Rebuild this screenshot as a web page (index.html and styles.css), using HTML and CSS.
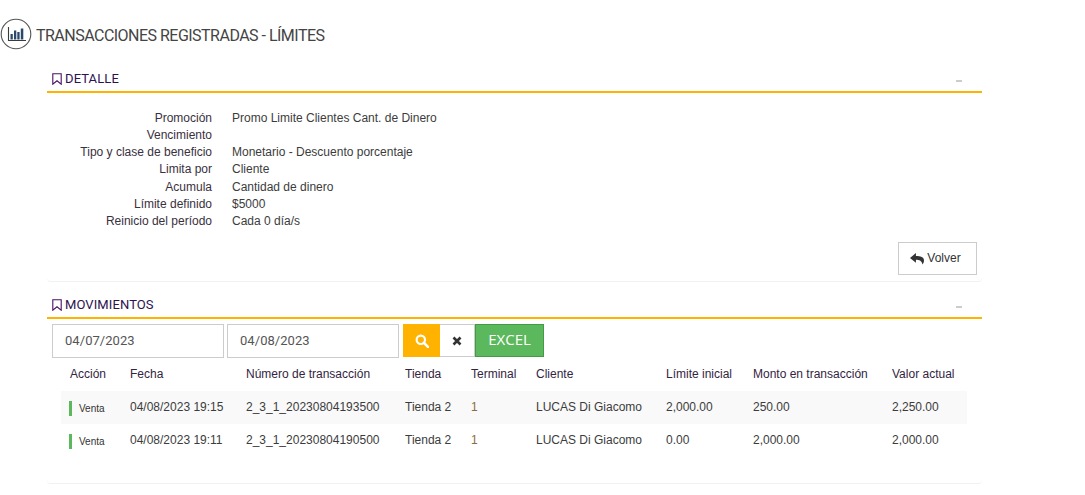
FILE: index.html
```html
<!DOCTYPE html>
<html lang="es">
<head>
<meta charset="utf-8">
<title>Transacciones registradas - Límites</title>
<link rel="stylesheet" href="styles.css">
</head>
<body>
<header class="page-title">
  <svg class="title-icon" width="32" height="32" viewBox="0 0 32 32" aria-hidden="true">
    <circle cx="16" cy="16" r="14.800" fill="none" stroke="#555" stroke-width="1.100"/>
    <path d="M8.500 9v13.500h17.500" fill="none" stroke="#3a3a3a" stroke-width="1.100"/>
    <path d="M10.500 16h2.300v5.500h-2.300zM14 12.500h2.300v9H14zM17.300 14h2.300v7.500h-2.300zM20.800 10.500h2.500v11h-2.500z" fill="#2b4a6b"/>
  </svg>
  <h1>TRANSACCIONES REGISTRADAS - LÍMITES</h1>
</header>

<main class="content">
  <section class="panel panel-detail">
    <div class="panel-head">
      <h2><svg class="bookmark" width="10" height="12" viewBox="0 0 10 12" aria-hidden="true"><path d="M.8.7h8.400v10.500L5 7.800.8 11.200z" fill="none" stroke="#4b0f63" stroke-width="1.100"/></svg>DETALLE</h2>
      <span class="collapse"></span>
    </div>
    <dl class="details">
      <dt>Promoción</dt><dd>Promo Limite Clientes Cant. de Dinero</dd>
      <dt>Vencimiento</dt><dd></dd>
      <dt>Tipo y clase de beneficio</dt><dd>Monetario - Descuento porcentaje</dd>
      <dt>Limita por</dt><dd>Cliente</dd>
      <dt>Acumula</dt><dd>Cantidad de dinero</dd>
      <dt>Límite definido</dt><dd>$5000</dd>
      <dt>Reinicio del período</dt><dd>Cada 0 día/s</dd>
    </dl>
    <div class="actions">
      <button class="btn-back" type="button">
        <svg width="14" height="12" viewBox="0 0 13 11" aria-hidden="true"><path d="M5.500 0 0 4.500 5.500 9V6.200c3.200 0 5 .7 6.200 4.300.8-1 1.300-2.300 1.300-3.600C13 3.600 9.800 2.800 5.500 2.800z" fill="#333"/></svg>Volver
      </button>
    </div>
  </section>

  <section class="panel panel-moves">
    <div class="panel-head">
      <h2><svg class="bookmark" width="10" height="12" viewBox="0 0 10 12" aria-hidden="true"><path d="M.8.7h8.400v10.500L5 7.800.8 11.200z" fill="none" stroke="#4b0f63" stroke-width="1.100"/></svg>MOVIMIENTOS</h2>
      <span class="collapse"></span>
    </div>
    <form class="filters">
      <input class="date" type="text" value="04/07/2023">
      <input class="date date-last" type="text" value="04/08/2023">
      <button class="btn-search" type="button" aria-label="Buscar">
        <svg width="14" height="14" viewBox="0 0 13 13" aria-hidden="true"><circle cx="5.400" cy="5.400" r="3.900" fill="none" stroke="#fff" stroke-width="2"/><path d="M8.300 8.300 12 12" stroke="#fff" stroke-width="2.400" stroke-linecap="round"/></svg>
      </button>
      <button class="btn-clear" type="button" aria-label="Limpiar">
        <svg width="10" height="10" viewBox="0 0 10 10" aria-hidden="true"><path d="M1.500 1.500l7 7M8.500 1.500l-7 7" stroke="#333" stroke-width="2.600"/></svg>
      </button>
      <button class="btn-excel" type="button">EXCEL</button>
    </form>
    <table class="moves">
      <thead>
        <tr>
          <th class="c-action">Acción</th><th class="c-date">Fecha</th><th class="c-num">Número de transacción</th><th class="c-store">Tienda</th><th class="c-term">Terminal</th><th class="c-client">Cliente</th><th class="c-lim">Límite inicial</th><th class="c-amount">Monto en transacción</th><th>Valor actual</th>
        </tr>
      </thead>
      <tbody>
        <tr class="odd">
          <td><span class="tag">Venta</span></td><td>04/08/2023 19:15</td><td>2_3_1_20230804193500</td><td>Tienda 2</td><td class="term">1</td><td>LUCAS Di Giacomo</td><td>2,000.00</td><td>250.00</td><td>2,250.00</td>
        </tr>
        <tr>
          <td><span class="tag">Venta</span></td><td>04/08/2023 19:11</td><td>2_3_1_20230804190500</td><td>Tienda 2</td><td class="term">1</td><td>LUCAS Di Giacomo</td><td>0.00</td><td>2,000.00</td><td>2,000.00</td>
        </tr>
      </tbody>
    </table>
  </section>
</main>
</body>
</html>
```
FILE: styles.css
```css
* { box-sizing: border-box; }
html, body { margin: 0; padding: 0; }
body {
  background: #fff;
  color: #333;
  font: 12px/17px "Liberation Sans", Arial, sans-serif;
  overflow: hidden;
}
.page-title {
  display: flex;
  align-items: center;
  gap: 4px;
  height: 32px;
  margin: 18px 0 0 0;
}
.title-icon { flex: none; }
.page-title h1 {
  margin: 0;
  padding-top: 4px;
  font: 400 16px/28px Roboto, sans-serif;
  letter-spacing: -0.52px;
  color: #444;
}
.content {
  width: 935px;
  margin: 17px 0 0 47px;
}
.panel { border-bottom: 1px solid #f1f1f1; border-radius: 0 0 4px 4px; }
.panel-head {
  display: flex;
  justify-content: space-between;
  align-items: center;
  height: 26px;
  border-bottom: 2px solid #ffb300;
  padding: 0 20px 1px 5px;
}
.panel-head h2 {
  display: flex;
  align-items: center;
  gap: 3px;
  margin: 0;
  font: 400 13px/16px Roboto, sans-serif;
  letter-spacing: 0.1px;
  color: #2c1250;
}
.bookmark { flex: none; }
.collapse { width: 6px; height: 2px; margin-top: 5px; background: #ccc; }
.details {
  display: grid;
  grid-template-columns: 165px 1fr;
  grid-auto-rows: 17.150px;
  column-gap: 20px;
  margin: 0;
  padding: 17px 0 0 0;
}
.details dt { text-align: right; color: #3a3040; }
.details dd { margin: 0; color: #3c3c3c; }
.actions {
  display: flex;
  justify-content: flex-end;
  padding: 12.300px 5px 6px 0;
}
.btn-back {
  display: flex;
  align-items: center;
  justify-content: center;
  gap: 3px;
  width: 79px;
  height: 33px;
  background: #fff;
  border: 1px solid #ccc;
  font: 12px/17px "Liberation Sans", sans-serif;
  color: #333;
  padding: 0 4px 0 0;
}
.panel-moves { height: 191px; margin-top: 11px; }
.filters {
  display: flex;
  padding: 5px 0 0 5px;
  height: 38px;
}
.date {
  width: 172px;
  height: 34px;
  margin-right: 3px;
  border: 1px solid #ccc;
  padding: 0 12px 1px;
  font: 13px/20px Roboto, sans-serif;
  letter-spacing: 0.05px;
  color: #555;
  background: #fff;
  outline: none;
}
.date-last { margin-right: 4px; }
.filters button { height: 33px; padding: 0; display: flex; align-items: center; justify-content: center; }
.btn-search { width: 37px; background: #ffb300; border: 1px solid #ffb300; }
.btn-clear { width: 35px; background: #fff; border: 1px solid #ccc; border-left: 0; }
.btn-excel {
  width: 69px;
  background: #5cb85c;
  border: 1px solid #459a45;
  color: #fff;
  font: 15px/17px "Open Sans", sans-serif;
  padding-bottom: 2px !important;
}
.moves {
  width: 906px;
  margin-left: 14px;
  border-collapse: collapse;
  table-layout: fixed;
}
.moves th, .moves td {
  padding: 0 0 0 7px;
  text-align: left;
  font-weight: 400;
  white-space: nowrap;
  overflow: visible;
}
.moves th { height: 34px; padding-bottom: 0; color: #33243f; }
.moves td { height: 33px; color: #3c3c3c; }
.moves .odd td { background: #f9f9f9; }
.c-action { width: 62px; }
.c-date { width: 116px; }
.c-num { width: 159px; }
.c-store { width: 66px; }
.c-term { width: 65px; }
.c-client { width: 130px; }
.c-lim { width: 87px; }
.c-amount { width: 139px; }
.moves th.c-action { padding-left: 9px; }
.moves td:first-child { padding-left: 8px; }
.tag {
  display: inline-block;
  border-left: 3px solid #5cb85c;
  padding-left: 7px;
  font-size: 10px;
  line-height: 15px;
  color: #333;
  vertical-align: middle;
}
.moves .term { color: #8a6d3b; }
```
